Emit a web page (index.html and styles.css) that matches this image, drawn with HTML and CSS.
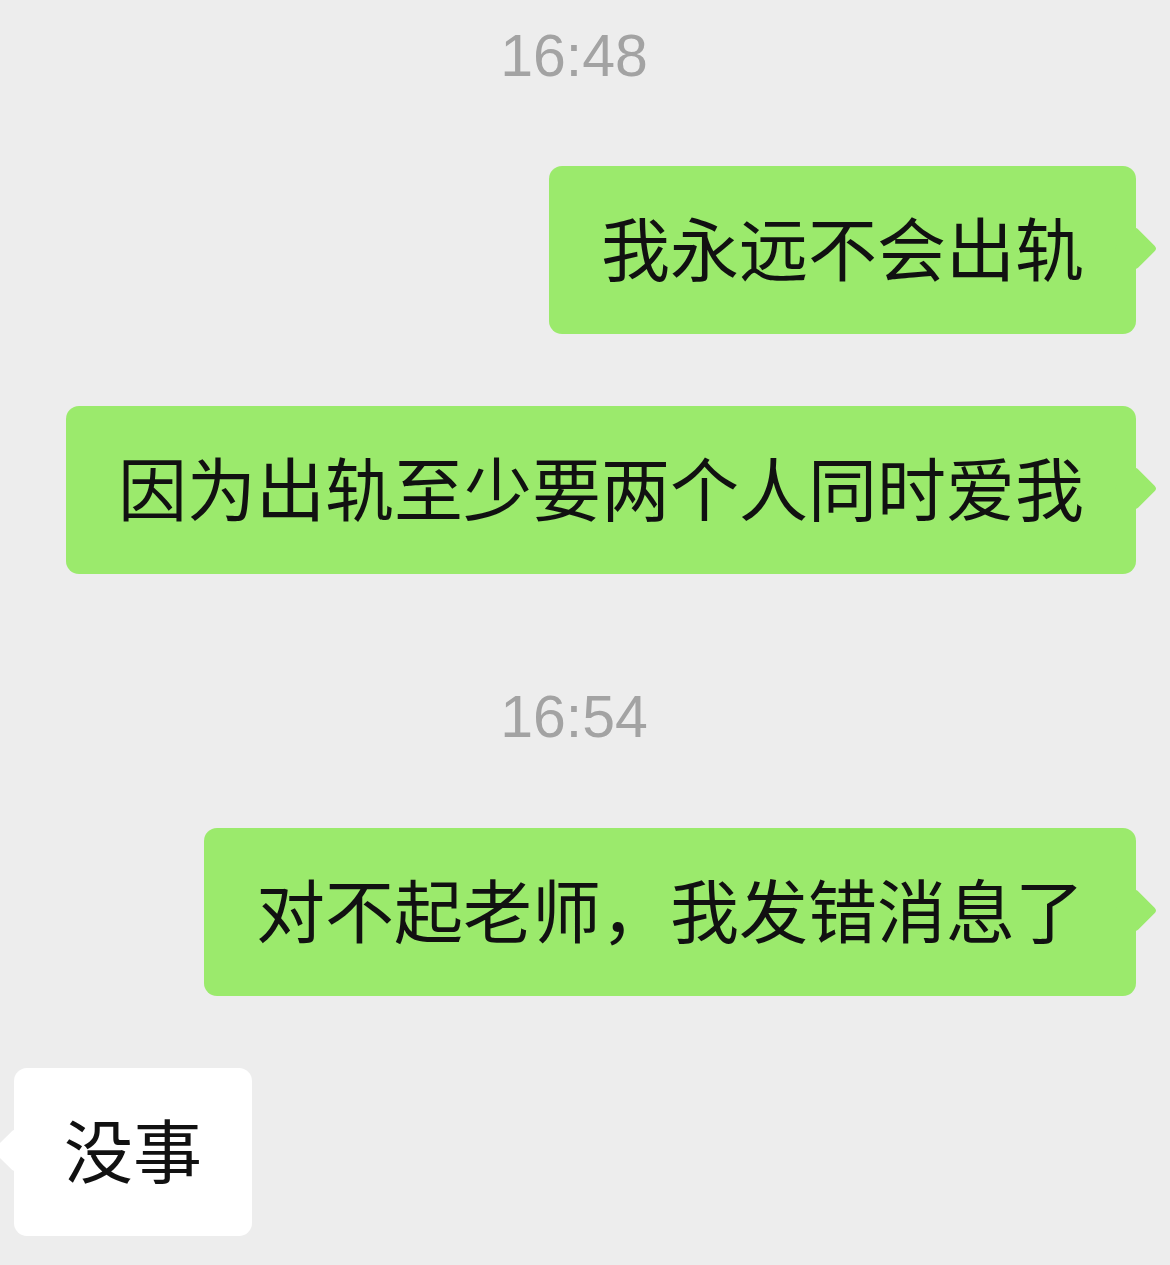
FILE: index.html
```html
<!DOCTYPE html>
<html lang="zh-CN">
<head>
<meta charset="UTF-8">
<title>聊天记录</title>
<link rel="stylesheet" href="styles.css">
</head>
<body>
<div class="chat">
  <div class="time time-first">16:48</div>
  <div class="row row-me">
    <div class="bubble bubble-me">我永远不会出轨</div>
  </div>
  <div class="row row-me">
    <div class="bubble bubble-me">因为出轨至少要两个人同时爱我</div>
  </div>
  <div class="time time-second">16:54</div>
  <div class="row row-me">
    <div class="bubble bubble-me">对不起老师，我发错消息了</div>
  </div>
  <div class="row row-other">
    <div class="bubble bubble-other">没事</div>
  </div>
</div>
</body>
</html>
```

FILE: styles.css
```css
html, body {
  margin: 0;
  padding: 0;
  background: #ededed;
}
.chat {
  display: flex;
  flex-direction: column;
  min-height: 1265px;
  padding: 21px 0 0;
  box-sizing: border-box;
  font-family: "Noto Sans CJK SC", "Noto Sans", sans-serif;
}
.time {
  text-align: center;
  padding-right: 22px;
  font-family: "Liberation Sans", Arial, sans-serif;
  font-size: 59px;
  line-height: 70px;
  color: #a3a3a3;
}
.time-first {
  margin: 0 0 75px;
}
.time-second {
  margin: 36px 0 76px;
}
.row {
  display: flex;
  margin-bottom: 72px;
}
.row-me {
  justify-content: flex-end;
  padding-right: 34px;
}
.row-other {
  justify-content: flex-start;
  padding-left: 14px;
}
.bubble {
  position: relative;
  height: 168px;
  box-sizing: border-box;
  padding: 0 52px 8px;
  display: flex;
  align-items: center;
  font-size: 69px;
  line-height: 1;
  color: #111;
  border-radius: 13px;
  white-space: nowrap;
}
.bubble-me {
  background: #9bea6c;
}
.bubble-other {
  background: #ffffff;
  padding: 0 50px 8px;
}
.bubble::after {
  content: "";
  position: absolute;
  top: 67px;
  width: 31px;
  height: 31px;
  border-radius: 4px;
  transform: rotate(45deg);
}
.bubble-me::after {
  right: -15px;
  background: #9bea6c;
}
.bubble-other::after {
  left: -15px;
  background: #ffffff;
}
```
